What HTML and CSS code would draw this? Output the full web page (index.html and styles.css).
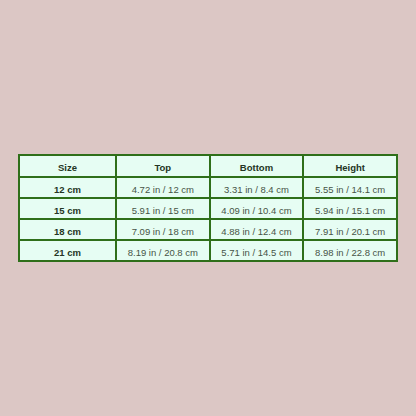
FILE: index.html
```html
<!DOCTYPE html>
<html>
<head>
<meta charset="utf-8">
<link rel="stylesheet" href="styles.css">
</head>
<body>
<div class="page">
<table class="sizes">
<colgroup><col class="c1"><col><col><col></colgroup>
<tr class="head"><th>Size</th><th>Top</th><th>Bottom</th><th>Height</th></tr>
<tr><th>12 cm</th><td>4.72 in / 12 cm</td><td>3.31 in / 8.4 cm</td><td>5.55 in / 14.1 cm</td></tr>
<tr><th>15 cm</th><td>5.91 in / 15 cm</td><td>4.09 in / 10.4 cm</td><td>5.94 in / 15.1 cm</td></tr>
<tr><th>18 cm</th><td>7.09 in / 18 cm</td><td>4.88 in / 12.4 cm</td><td>7.91 in / 20.1 cm</td></tr>
<tr><th>21 cm</th><td>8.19 in / 20.8 cm</td><td>5.71 in / 14.5 cm</td><td>8.98 in / 22.8 cm</td></tr>
</table>
</div>
</body>
</html>
```
FILE: styles.css
```css
html, body {
  margin: 0;
  padding: 0;
  background: #dcc7c5;
}
.page {
  width: 416px;
  height: 416px;
  display: flex;
  align-items: center;
  justify-content: center;
}
.sizes {
  width: 380px;
  border: 1px solid #2f6f1a;
  border-spacing: 0;
  table-layout: fixed;
  font-family: "Liberation Sans", Arial, sans-serif;
  font-size: 9.5px;
}
.sizes .c1 {
  width: 97px;
}
.sizes th, .sizes td {
  border: 1px solid #2f6f1a;
  background: #e6fdf3;
  text-align: center;
  height: 14px;
  padding: 4px 0 1px;
}
.sizes th {
  font-weight: bold;
  color: #243524;
}
.sizes td {
  color: #465446;
}
.sizes .head th {
  height: 15px;
}
```
